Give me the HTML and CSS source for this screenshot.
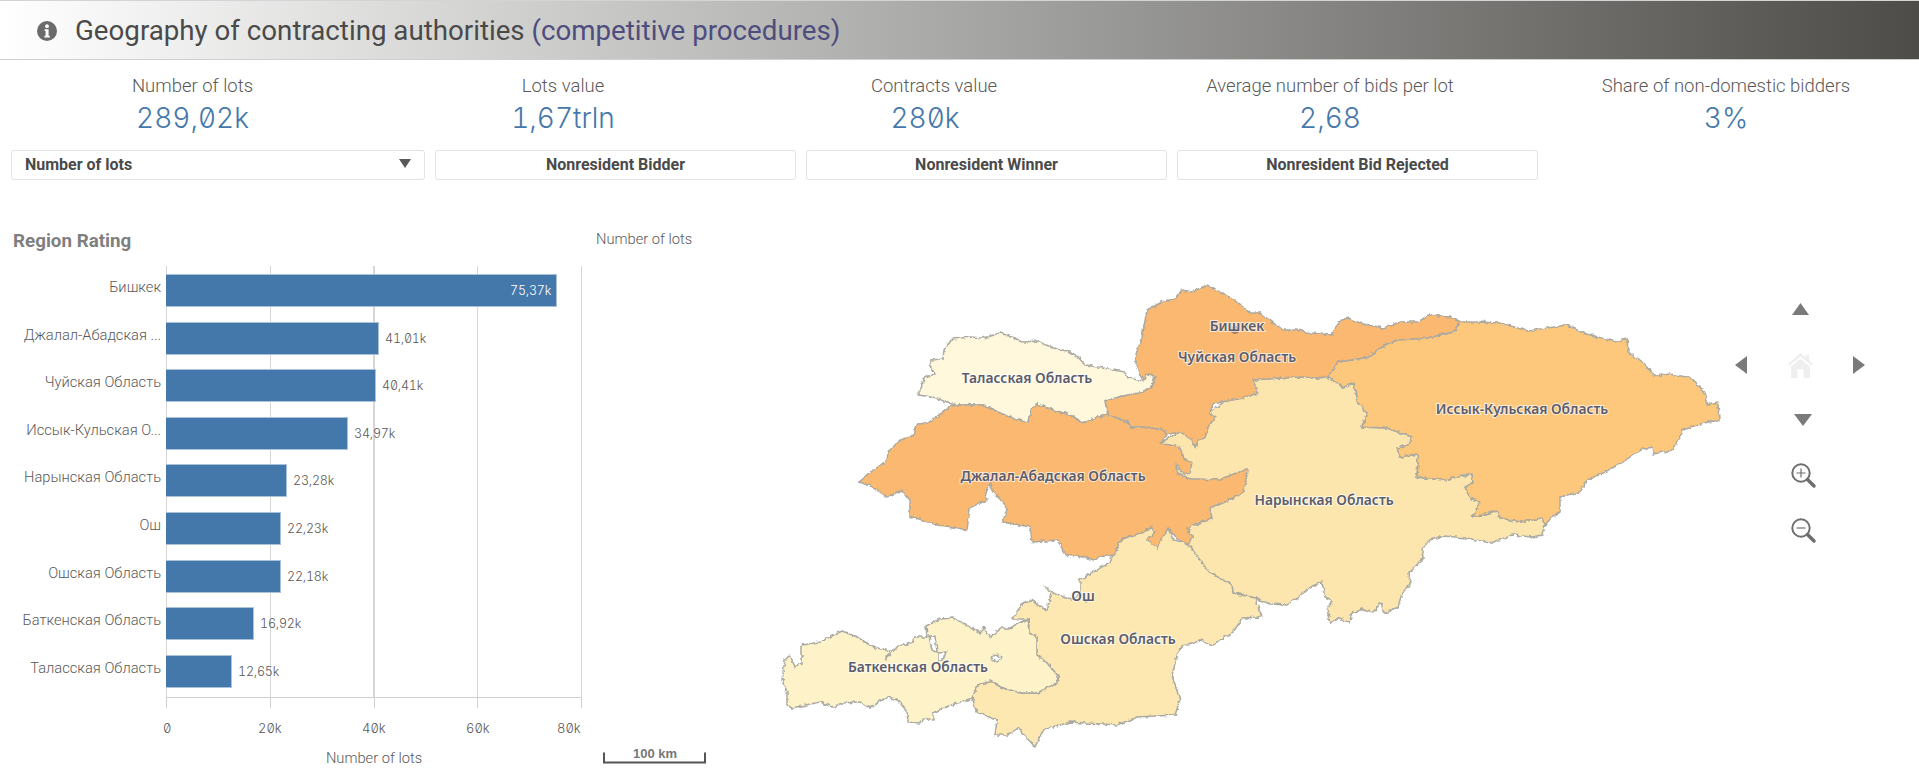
FILE: index.html
```html
<!DOCTYPE html>
<html lang="ru">
<head>
  <meta charset="UTF-8">
  <title>Geography of contracting authorities</title>
  <link rel="stylesheet" href="styles.css">
</head>
<body>

  <header class="title-bar">
    <svg class="info-icon" width="20" height="20" viewBox="0 0 20 20">
      <circle cx="10" cy="10" r="10" fill="#6b6b6b"/>
      <circle cx="10" cy="5.2" r="1.9" fill="#fff"/>
      <path d="M7.6 8.2h4v6.6h1.2v1.7H7.4v-1.7h1.2V9.9h-1z" fill="#fff"/>
    </svg>
    <h1>Geography of contracting authorities <span class="accent">(competitive procedures)</span></h1>
  </header>

  <section class="kpis">
    <div class="kpi"><div class="kpi-label">Number of lots</div><div class="kpi-value">289,02k</div></div>
    <div class="kpi"><div class="kpi-label">Lots value</div><div class="kpi-value">1,67trln</div></div>
    <div class="kpi"><div class="kpi-label">Contracts value</div><div class="kpi-value shifted">280k</div></div>
    <div class="kpi"><div class="kpi-label">Average number of bids per lot</div><div class="kpi-value">2,68</div></div>
    <div class="kpi"><div class="kpi-label">Share of non-domestic bidders</div><div class="kpi-value">3%</div></div>
  </section>

  <section class="filters">
    <div class="filter select">Number of lots<span class="caret"></span></div>
    <div class="filter">Nonresident Bidder</div>
    <div class="filter">Nonresident Winner</div>
    <div class="filter">Nonresident Bid Rejected</div>
  </section>

  <main class="content">
    <section class="rating">
      <h3>Region Rating</h3>
      <div class="chart-body">
        <div class="cat-labels">
          <div>Бишкек</div>
          <div>Джалал-Абадская ...</div>
          <div>Чуйская Область</div>
          <div>Иссык-Кульская О...</div>
          <div>Нарынская Область</div>
          <div>Ош</div>
          <div>Ошская Область</div>
          <div>Баткенская Область</div>
          <div>Таласская Область</div>
        </div>
        <div class="plot">
          <div class="bar-row"><div class="bar" style="width:391px"></div><span class="bar-value inside">75,37k</span></div>
          <div class="bar-row"><div class="bar" style="width:213px"></div><span class="bar-value">41,01k</span></div>
          <div class="bar-row"><div class="bar" style="width:210px"></div><span class="bar-value">40,41k</span></div>
          <div class="bar-row"><div class="bar" style="width:182px"></div><span class="bar-value">34,97k</span></div>
          <div class="bar-row"><div class="bar" style="width:121px"></div><span class="bar-value">23,28k</span></div>
          <div class="bar-row"><div class="bar" style="width:115px"></div><span class="bar-value">22,23k</span></div>
          <div class="bar-row"><div class="bar" style="width:115px"></div><span class="bar-value">22,18k</span></div>
          <div class="bar-row"><div class="bar" style="width:88px"></div><span class="bar-value">16,92k</span></div>
          <div class="bar-row"><div class="bar" style="width:66px"></div><span class="bar-value">12,65k</span></div>
        </div>
      </div>
      <div class="ticks"><i></i><i></i><i></i><i></i></div>
      <div class="tick-labels"><span>0</span><span>20k</span><span>40k</span><span>60k</span><span>80k</span></div>
      <div class="axis-title">Number of lots</div>
    </section>

    <section class="map-panel">
      <div class="map-caption">Number of lots</div>
      <svg class="map" width="1319" height="530" viewBox="600 250 1319 530">
        <defs>
          <filter id="rough" x="-2%" y="-2%" width="104%" height="104%">
            <feTurbulence type="fractalNoise" baseFrequency="0.22" numOctaves="2" seed="4" result="noise"/>
            <feDisplacementMap in="SourceGraphic" in2="noise" scale="4.500" xChannelSelector="R" yChannelSelector="G"/>
            <feGaussianBlur stdDeviation="0.45"/>
          </filter>
        </defs>

        <g class="regions" filter="url(#rough)">
          <!-- Нарын -->
          <path fill="#fde6ae" d="M1253 380L1280 378 1300 377 1315 378 1327 377 1343 387 1354 383 1357 402 1367 413 1362 427 1387 428 1412 437 1408 445 1397 448 1400 457 1417 454 1418 462 1417 477 1443 480 1472 474 1473 483 1465 487 1470 498 1480 502 1473 517 1497 511 1500 518 1520 522 1542 518 1545 525 1542 535 1532 537 1513 535 1490 543 1467 538 1443 536 1430 540 1422 548 1423 559 1409 572 1410 585 1402 593 1398 607 1384 614 1381 603 1373 612 1363 609 1352 613 1349 623 1340 618 1330 623 1327 610 1332 601 1325 598 1322 582 1310 587 1297 598 1287 605 1270 604 1255 598 1233 593 1232 585 1210 573 1188 547 1160 443 1200 420z"/>
          <!-- Ошская -->
          <path fill="#fde8b2" d="M1012 619L1023 603 1030 600 1047 610 1051 595 1045 587 1048 587 1053 593 1072 599 1080 595 1080 580 1110 562 1118 542 1143 532 1153 527 1155 533 1147 540 1157 548 1168 528 1173 540 1187 543 1210 573 1232 585 1233 593 1255 598 1262 617 1243 618 1233 632 1213 645 1200 640 1183 646 1178 652 1172 675 1180 700 1175 715 1137 717 1117 725 1070 722 1043 730 1035 747 1018 728 1008 735 995 735 997 720 977 712 972 698 978 685 990 681 1003 688 1022 693 1037 693 1057 683 1059 677 1047 663 1037 655 1037 637 1029 633 1028 619z"/>
          <!-- Баткен -->
          <path fill="#fef2c9" d="M782 680L785 660 790 655 795 667 802 663 802 645 820 642 842 631 857 637 873 647 890 651 885 660 898 646 912 643 915 637 927 637 926 626 940 619 953 618 970 627 981 633 983 627 990 637 1002 628 1010 628 1028 619 1029 633 1037 637 1037 655 1047 663 1059 677 1057 683 1037 693 1022 693 1003 688 990 681 978 685 972 698 958 703 943 708 933 713 933 720 925 718 920 723 908 722 907 712 898 700 887 697 870 708 860 702 842 703 833 707 820 702 792 708 787 705 787 693z"/>
          <path fill="#fff" d="M929 636L935 636 937 652 932 650zM938 653L946 652 943 660 938 660zM991 658L997 654 1002 658 997 662z"/>
          <!-- Талас -->
          <path fill="#fff8dc" d="M918 395L925 377 935 374 929 365 931 360 943 359 944 350 952 339 962 338 970 337 983 338 1000 333 1012 337 1023 342 1037 341 1053 348 1067 351 1078 357 1085 365 1103 368 1125 372 1128 378 1143 381 1147 374 1155 377 1152 387 1140 393 1123 396 1105 401 1108 414 1090 420 1083 423 1070 415 1053 410 1037 404 1032 407 1028 422 1017 420 1000 413 983 405 960 405 952 404 937 398 925 396z"/>
          <!-- Джалал-Абад -->
          <path fill="#fbb86f" d="M859 482L870 473 887 460 888 452 900 440 913 436 917 424 928 423 943 412 952 405 960 405 983 405 1000 413 1017 420 1028 422 1032 407 1037 404 1053 410 1070 415 1083 423 1090 420 1108 414 1127 422 1130 427 1147 427 1163 430 1167 435 1160 443 1180 447 1183 458 1192 462 1190 474 1183 473 1175 463 1178 473 1190 479 1200 479 1220 480 1243 470 1248 470 1243 493 1223 503 1210 508 1212 518 1187 528 1193 537 1187 545 1175 537 1168 528 1160 543 1157 548 1147 540 1155 533 1152 527 1143 532 1120 540 1115 555 1098 557 1095 560 1083 557 1065 555 1058 540 1032 542 1030 527 1003 522 1007 507 998 497 992 490 990 483 985 497 987 500 970 508 967 530 953 527 937 525 913 517 910 518 910 500 902 490 887 497 873 487z"/>
          <!-- Иссык-Куль -->
          <path fill="#fdc77c" d="M1460 322L1477 322 1500 323 1528 331 1567 325 1583 333 1617 342 1627 338 1628 352 1643 363 1655 376 1670 374 1692 378 1705 393 1708 405 1718 403 1719 420 1700 424 1683 430 1673 450 1653 454 1652 447 1640 450 1623 462 1603 473 1587 480 1580 492 1560 497 1560 512 1552 517 1545 525 1542 518 1520 522 1500 518 1497 511 1473 517 1480 502 1470 498 1465 487 1473 483 1472 474 1443 480 1417 477 1418 462 1417 454 1400 457 1397 448 1408 445 1412 437 1387 428 1362 427 1367 413 1357 402 1354 383 1343 387 1327 377 1338 362 1370 357 1380 347 1397 340 1427 338 1453 332z"/>
          <!-- Чуй -->
          <path fill="#fbb86f" d="M1207 285L1220 293 1233 298 1250 313 1260 313 1283 330 1297 330 1310 333 1332 335 1338 322 1348 318 1360 323 1383 328 1400 322 1418 322 1428 315 1450 317 1460 322 1453 332 1427 338 1397 340 1380 347 1370 357 1338 362 1327 377 1315 378 1300 377 1280 378 1253 380 1258 393 1243 398 1213 404 1210 413 1215 418 1208 427 1205 438 1198 440 1195 447 1192 440 1182 433 1167 433 1163 430 1147 427 1130 427 1127 422 1108 414 1105 401 1123 396 1140 393 1152 387 1155 377 1147 374 1143 381 1137 368 1135 357 1142 337 1147 310 1162 302 1175 298 1182 290 1192 292z"/>
        </g>

        <circle cx="1235" cy="330" r="4" fill="#a98468"/>
        <circle cx="1086" cy="601" r="1.5" fill="#8d8a7e"/>

        <g class="map-labels">
          <text x="1027" y="383">Таласская Область</text>
          <text x="1053" y="481">Джалал-Абадская Область</text>
          <text x="1237" y="362">Чуйская Область</text>
          <text x="1237" y="331">Бишкек</text>
          <text x="1522" y="414">Иссык-Кульская Область</text>
          <text x="1324" y="505">Нарынская Область</text>
          <text x="1083" y="601">Ош</text>
          <text x="1118" y="644">Ошская Область</text>
          <text x="918" y="672">Баткенская Область</text>
        </g>

        <g class="map-nav">
          <path d="M1792 315L1800.500 303 1809 315z"/>
          <path d="M1735 365L1747 356V374z"/>
          <path d="M1853 356L1865 365 1853 374z"/>
          <path d="M1794 414H1812L1803 426z"/>
          <path class="home" d="M1800.500 353L1806 357.500V354.500H1809V360L1813 364 1811.500 365.500 1800.500 356.500 1789.500 365.500 1788 364zM1791 366.500L1800.500 359 1810 366.500V378H1803.500V369H1797.500V378H1791z"/>
          <g class="lens">
            <circle cx="1801" cy="473" r="8.700"/>
            <path class="handle" d="M1807.500 479.500L1814 486"/>
            <path class="sign" d="M1796.500 473H1805.500M1801 468.500V477.500"/>
          </g>
          <g class="lens">
            <circle cx="1801" cy="528" r="8.700"/>
            <path class="handle" d="M1807.500 534.500L1814 541"/>
            <path class="sign" d="M1796.500 528H1805.500"/>
          </g>
        </g>

        <g class="scale-bar">
          <path d="M604 752.500V762.500H705V752.500"/>
          <text x="655" y="758">100 km</text>
        </g>
      </svg>
    </section>
  </main>

</body>
</html>
```

FILE: styles.css
```css
body {
  margin: 0;
  width: 1919px;
  height: 780px;
  overflow: hidden;
  background: #fff;
  font-family: Roboto, sans-serif;
  color: #595959;
}

.title-bar {
  box-sizing: border-box;
  height: 60px;
  display: flex;
  align-items: center;
  padding-left: 37px;
  padding-top: 1px;
  border-top: 1px solid #d4d4d4;
  border-bottom: 1px solid #d0d0d0;
  background: linear-gradient(to right, #fff 0%, #a7a7a5 50%, #4e4c49 100%);
}
.title-bar h1 {
  margin: 0 0 0 18px;
  font-size: 27.7px;
  font-weight: 400;
  color: #4a4a4a;
  white-space: nowrap;
}
.accent {
  color: #4d4d7e;
}

.kpis {
  display: grid;
  grid-template-columns: 385px 356px 386px 406px 386px;
  padding-top: 14px;
  margin-bottom: 12px;
  text-align: center;
}
.kpi-label {
  font-size: 18.5px;
  font-weight: 300;
  line-height: 24px;
  color: #595959;
}
.kpi-value {
  font-family: Inter, sans-serif;
  font-size: 28px;
  font-weight: 300;
  line-height: 40px;
  color: #4477aa;
  font-variant-numeric: slashed-zero tabular-nums;
}
.kpi-value.shifted {
  padding-right: 18px;
}

.filters {
  display: grid;
  grid-template-columns: 414px 361px 361px 361px;
  gap: 10px;
  margin-left: 11px;
}
.filter {
  box-sizing: border-box;
  height: 30px;
  line-height: 28px;
  border: 1px solid #e3e3e3;
  border-radius: 3px;
  font-size: 16px;
  font-weight: 700;
  text-align: center;
  color: #4a4a4a;
}
.filter.select {
  display: flex;
  justify-content: space-between;
  align-items: center;
  padding: 0 13px 0 13px;
}
.caret {
  width: 0;
  height: 0;
  border-left: 6px solid transparent;
  border-right: 6px solid transparent;
  border-top: 9px solid #595959;
  margin-top: -4px;
}

.content {
  display: flex;
  margin-top: 49px;
}

.rating {
  width: 596px;
  flex: none;
}
.rating h3 {
  margin: 0 0 13px 13px;
  font-size: 18.8px;
  font-weight: 700;
  line-height: 24px;
  color: #7f7f7f;
}
.chart-body {
  display: flex;
  gap: 5px;
}
.cat-labels {
  width: 161px;
  padding-top: 8px;
  display: flex;
  flex-direction: column;
  gap: 14.6px;
  font-size: 14.7px;
  font-weight: 300;
  color: #595959;
  text-align: right;
  white-space: nowrap;
}
.cat-labels div {
  height: 33px;
  line-height: 27px;
}
.plot {
  box-sizing: border-box;
  width: 416px;
  padding: 8px 0 9px;
  display: flex;
  flex-direction: column;
  gap: 14.6px;
  border-bottom: 1px solid #d0d0d0;
  background: repeating-linear-gradient(to right, #d6d6d6 0 1px, transparent 1px 103.75px);
  border-right: 1px solid #d6d6d6;
}
.bar-row {
  display: flex;
  align-items: center;
  height: 33px;
}
.bar {
  box-sizing: border-box;
  height: 33px;
  flex: none;
  background: #4477aa;
  border: 1px solid #a9c1d9;
  border-left: none;
}
.bar-value {
  margin-left: 6px;
  font-family: Inter, sans-serif;
  font-size: 12.5px;
  font-weight: 300;
  color: #595959;
  font-variant-numeric: slashed-zero tabular-nums;
  letter-spacing: -.2px;
  white-space: nowrap;
}
.bar-value.inside {
  margin-left: -47px;
  color: #fff;
}

.ticks {
  display: grid;
  grid-template-columns: repeat(4, 103.75px);
  margin-left: 166px;
  width: 416px;
  height: 10px;
  border-right: 1px solid #d0d0d0;
  box-sizing: border-box;
}
.ticks i {
  border-left: 1px solid #d0d0d0;
}
.tick-labels {
  display: grid;
  grid-template-columns: 95px 104px 104px 91px auto;
  margin: 12px 0 0 163px;
  font-family: Inter, sans-serif;
  font-size: 13px;
  font-weight: 300;
  line-height: 16px;
  color: #595959;
  font-variant-numeric: slashed-zero tabular-nums;
}
.axis-title {
  margin: 13px 0 0 166px;
  width: 416px;
  font-size: 14.7px;
  font-weight: 300;
  line-height: 18px;
  text-align: center;
  color: #595959;
}

.map-panel {
  flex: 1;
  margin-top: 1px;
}
.map-caption {
  font-size: 14.7px;
  font-weight: 300;
  line-height: 18px;
  margin-bottom: 2px;
  color: #595959;
}
.map {
  display: block;
  margin-left: 4px;
}
.regions path {
  stroke: #aaa9a2;
  stroke-width: 1.500;
  stroke-linejoin: round;
}
.map-labels text {
  font-family: "Noto Sans", sans-serif;
  font-size: 13.8px;
  font-weight: 600;
  text-anchor: middle;
  fill: #5c5d6c;
  stroke: #fff;
  stroke-width: 2px;
  stroke-opacity: .7;
  paint-order: stroke;
}
.map-nav path {
  fill: #7a7a7a;
}
.map-nav .home {
  fill: #efefef;
}
.lens circle,
.lens .handle,
.lens .sign {
  fill: none;
  stroke: #6f6f6f;
}
.lens circle {
  stroke-width: 2;
}
.lens .handle {
  stroke-width: 3.500;
  stroke-linecap: round;
}
.lens .sign {
  stroke-width: 1.200;
}
.scale-bar path {
  fill: none;
  stroke: #555;
  stroke-width: 2;
}
.scale-bar text {
  font-family: "Liberation Sans", sans-serif;
  font-size: 13px;
  font-weight: 700;
  text-anchor: middle;
  fill: #777;
}
```
